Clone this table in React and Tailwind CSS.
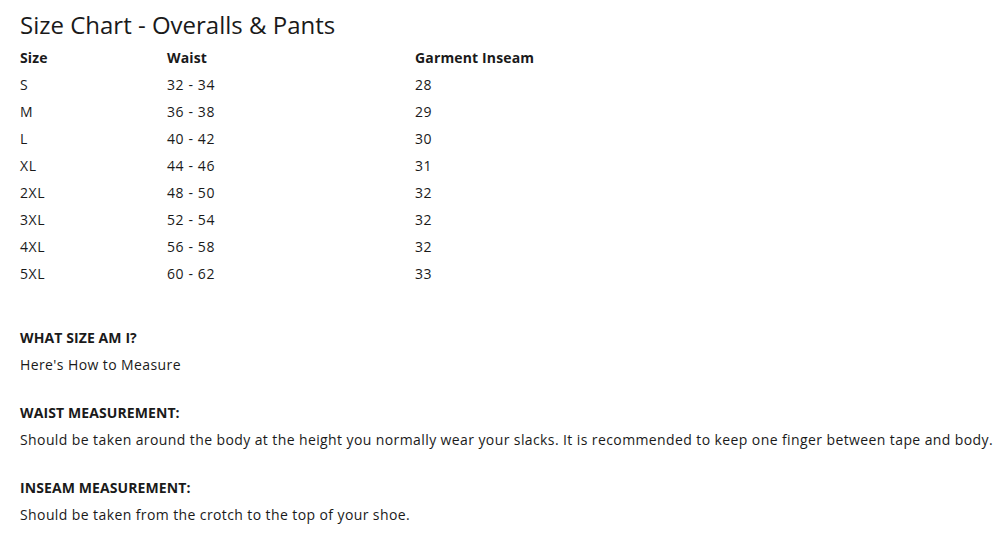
export default function App() {
  const rows = [
    ["S", "32 - 34", "28"],
    ["M", "36 - 38", "29"],
    ["L", "40 - 42", "30"],
    ["XL", "44 - 46", "31"],
    ["2XL", "48 - 50", "32"],
    ["3XL", "52 - 54", "32"],
    ["4XL", "56 - 58", "32"],
    ["5XL", "60 - 62", "33"],
  ];
  return (
    <div className="w-[1000px] h-[534px] bg-white text-[#1a1a1a] pl-5 pt-[9px] overflow-hidden" style={{ fontFamily: '"Open Sans", sans-serif' }}>
      <h1 className="text-[24px] leading-[32px] font-normal">Size Chart - Overalls &amp; Pants</h1>
      <div className="mt-[3px] text-[14px]">
        <div className="grid grid-cols-[147px_248px_1fr] h-[27px] items-center font-bold tracking-[0.15px]">
          <div>Size</div>
          <div>Waist</div>
          <div>Garment Inseam</div>
        </div>
        {rows.map((r) => (
          <div key={r[0]} className="grid grid-cols-[147px_248px_1fr] h-[27px] items-center tracking-[0.6px]">
            <div>{r[0]}</div>
            <div>{r[1]}</div>
            <div>{r[2]}</div>
          </div>
        ))}
      </div>
      <div className="text-[14px] leading-[27px] mt-[37px] whitespace-nowrap">
        <div className="font-bold tracking-[0.1px]">WHAT SIZE AM I?</div>
        <div className="tracking-[0.4px]">Here's How to Measure</div>
        <div className="font-bold mt-[21px] tracking-[0.1px]">WAIST MEASUREMENT:</div>
        <div className="tracking-[0.4px]">Should be taken around the body at the height you normally wear your slacks. It is recommended to keep one finger between tape and body.</div>
        <div className="font-bold mt-[21px] tracking-[0.1px]">INSEAM MEASUREMENT:</div>
        <div className="tracking-[0.4px]">Should be taken from the crotch to the top of your shoe.</div>
      </div>
    </div>
  );
}
